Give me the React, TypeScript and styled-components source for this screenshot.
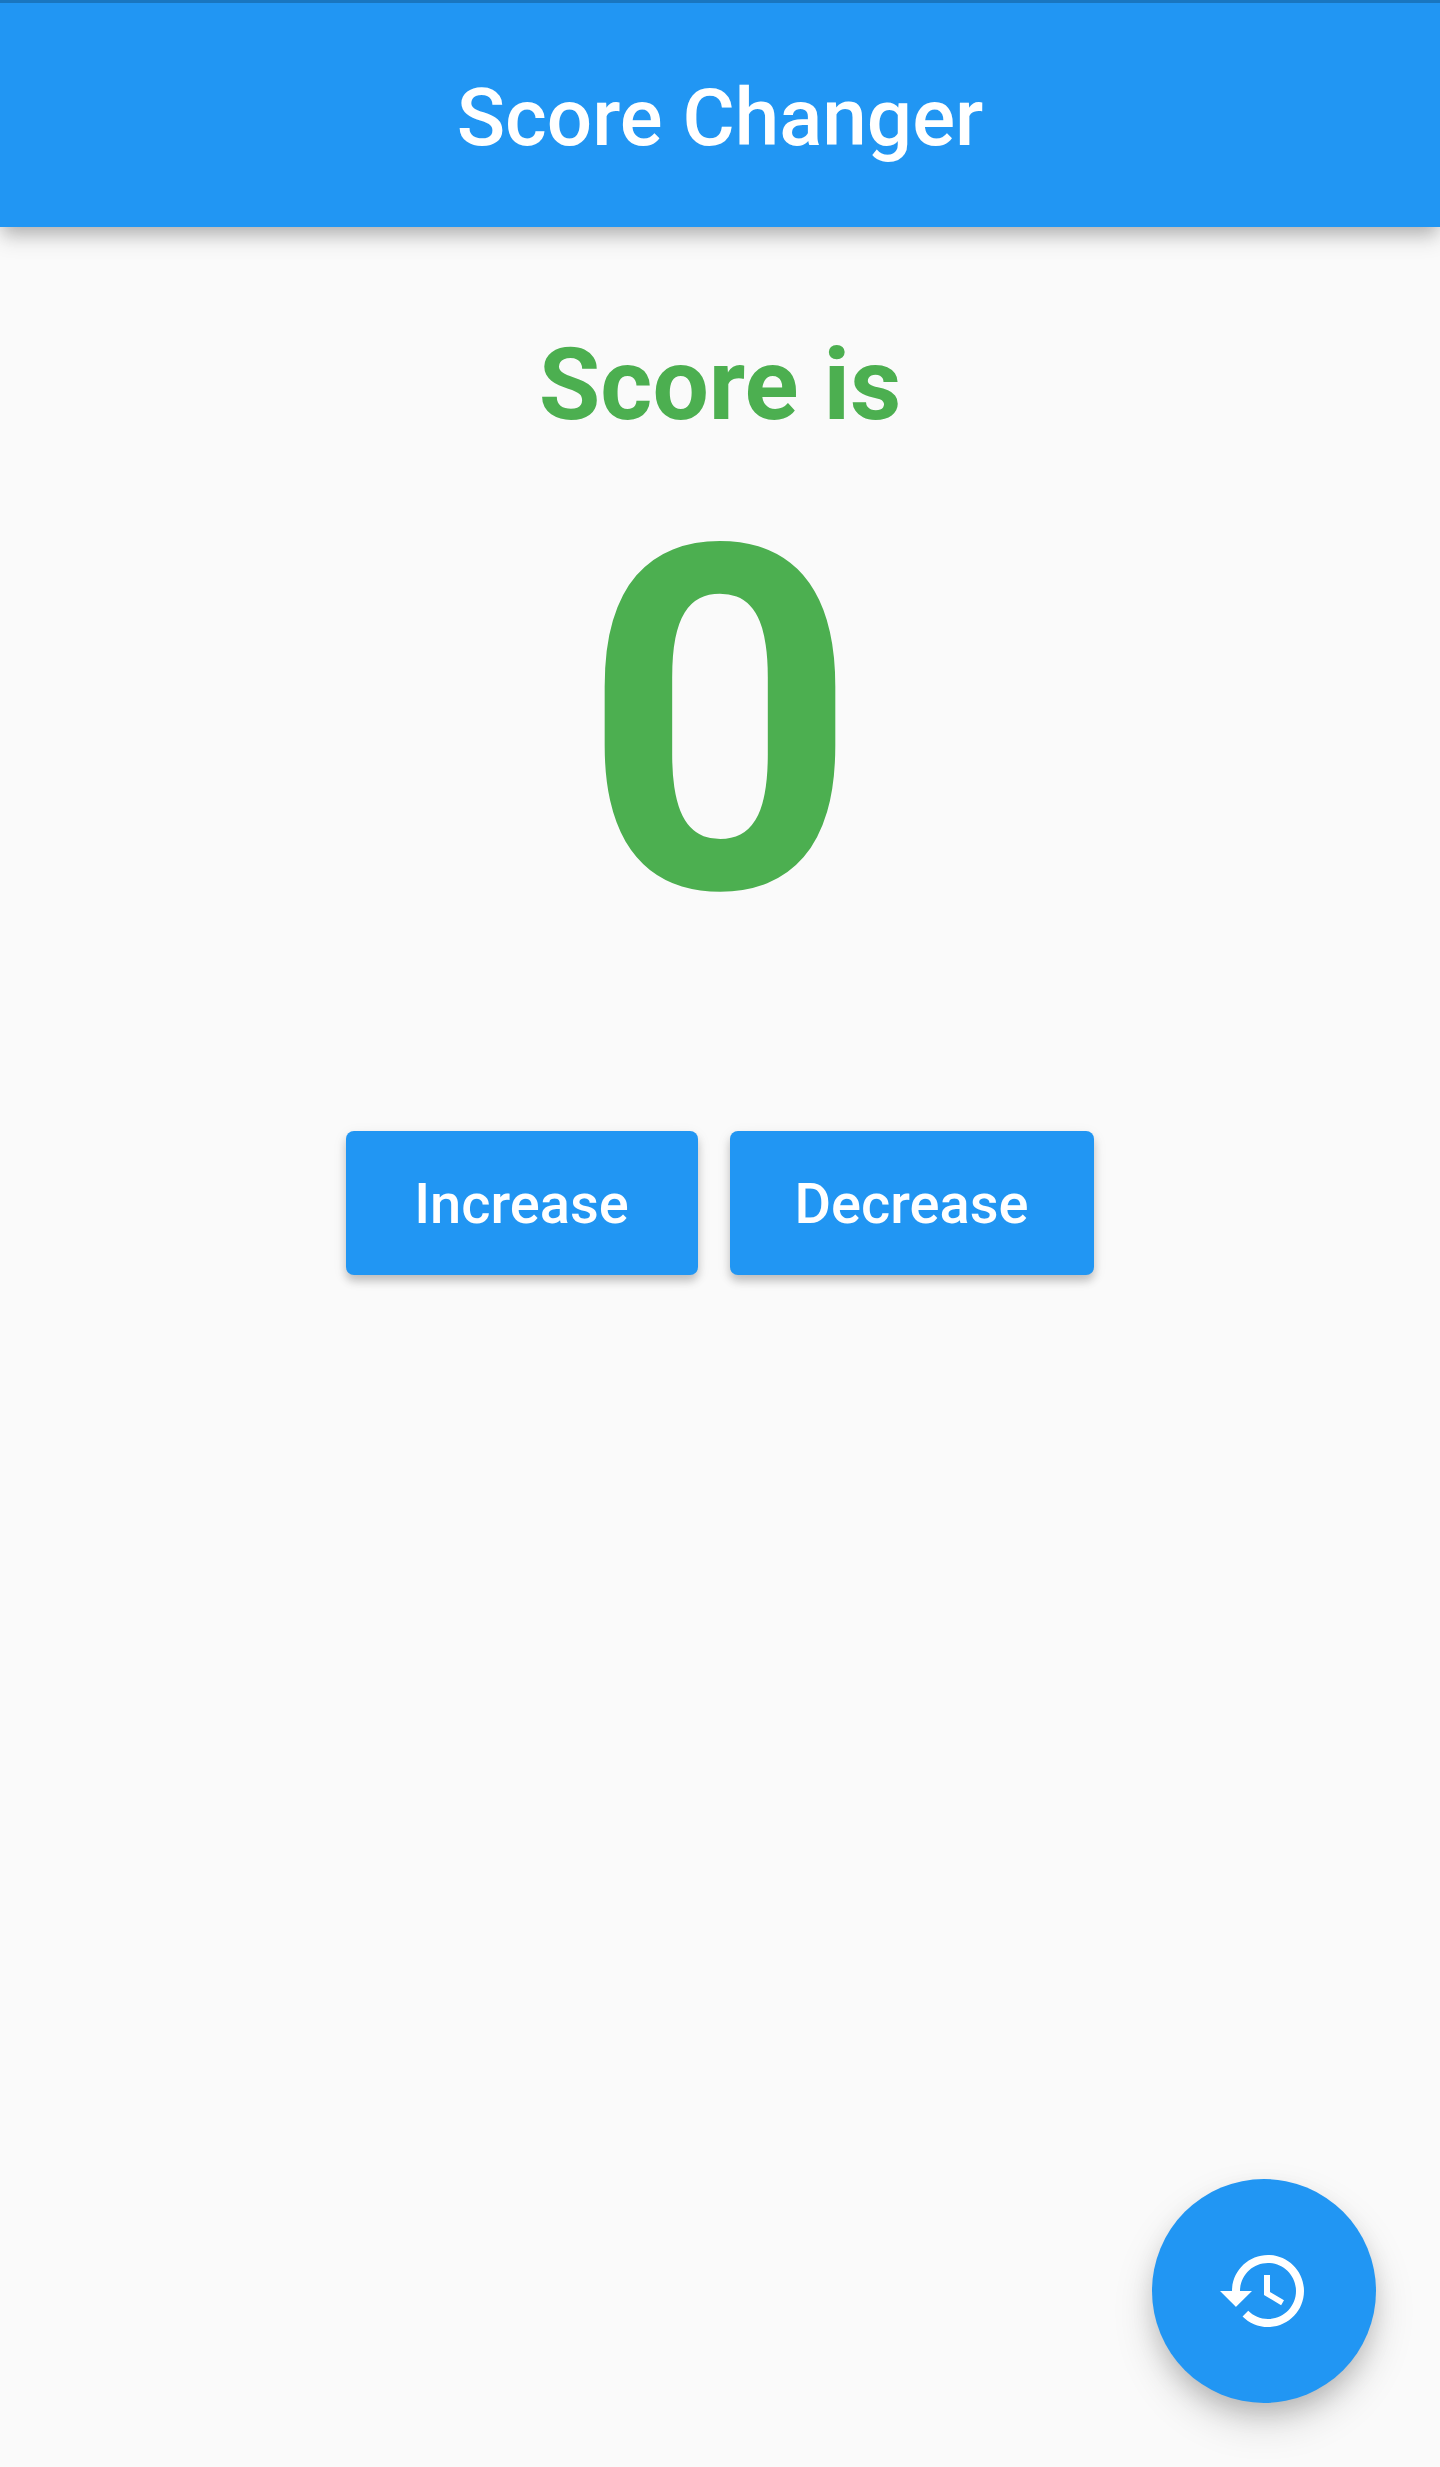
import React, { useState } from "react";
import styled, { createGlobalStyle } from "styled-components";

const GlobalStyle = createGlobalStyle`
  body { margin: 0; background: #fafafa; font-family: Roboto, sans-serif; }
  * { box-sizing: border-box; }
`;

const Screen = styled.div`
  position: relative;
  display: flex;
  flex-direction: column;
  width: 1440px;
  height: 2467px;
  background: #fafafa;
  overflow: hidden;
`;

const AppBar = styled.header`
  display: flex;
  align-items: center;
  justify-content: center;
  flex: none;
  height: 227px;
  padding-top: 6px;
  border-top: 3px solid #1976bf;
  background: #2196f3;
  box-shadow: 0 8px 16px -4px rgba(0, 0, 0, 0.2), 0 12px 20px rgba(0, 0, 0, 0.14);
`;

const Title = styled.h1`
  margin: 0;
  color: #fff;
  font-size: 80px;
  font-weight: 500;
  line-height: 94px;
`;

const Content = styled.main`
  display: flex;
  flex-direction: column;
  align-items: center;
  padding-top: 99px;
`;

const Label = styled.p`
  margin: 0;
  color: #4caf50;
  font-size: 100px;
  font-weight: 700;
  line-height: 117px;
`;

const Score = styled.output`
  margin-top: -1px;
  color: #4caf50;
  font-size: 480px;
  font-weight: 700;
  line-height: 563px;
`;

const Actions = styled.div`
  display: flex;
  gap: 32px;
  margin-top: 126px;
`;

const Button = styled.button<{ $width: number }>`
  width: ${(p) => p.$width}px;
  height: 144px;
  padding: 2px 1px 0 0;
  border: 0;
  border-radius: 8px;
  background: #2196f3;
  color: #fff;
  font: 500 56px Roboto, sans-serif;
  box-shadow: 0 6px 8px rgba(0, 0, 0, 0.2), 0 4px 16px rgba(0, 0, 0, 0.07);
`;

const Fab = styled.button`
  position: absolute;
  right: 64px;
  bottom: 64px;
  display: grid;
  place-items: center;
  width: 224px;
  height: 224px;
  padding: 0;
  border: 0;
  border-radius: 50%;
  background: #2196f3;
  color: #fff;
  box-shadow: 0 12px 24px -4px rgba(0, 0, 0, 0.17), 0 20px 40px rgba(0, 0, 0, 0.15);
`;

export default function App() {
  const [score, setScore] = useState(0);
  return (
    <>
      <GlobalStyle />
      <Screen>
        <AppBar>
          <Title>Score Changer</Title>
        </AppBar>
        <Content>
          <Label>Score is</Label>
          <Score>{score}</Score>
          <Actions>
            <Button $width={352} onClick={() => setScore(score + 1)}>Increase</Button>
            <Button $width={364} onClick={() => setScore(score - 1)}>Decrease</Button>
          </Actions>
        </Content>
        <Fab aria-label="Reset score" onClick={() => setScore(0)}>
          <svg width="96" height="96" viewBox="0 0 24 24" fill="currentColor">
            <path d="M13 3c-4.97 0-9 4.03-9 9H1l3.89 3.89.07.14L9 12H6c0-3.87 3.13-7 7-7s7 3.13 7 7-3.13 7-7 7c-1.93 0-3.68-.79-4.94-2.06l-1.42 1.42C8.27 19.99 10.51 21 13 21c4.97 0 9-4.03 9-9s-4.03-9-9-9zm-1 5v5l4.28 2.54.72-1.21-3.5-2.08V8H12z" />
          </svg>
        </Fab>
      </Screen>
    </>
  );
}
